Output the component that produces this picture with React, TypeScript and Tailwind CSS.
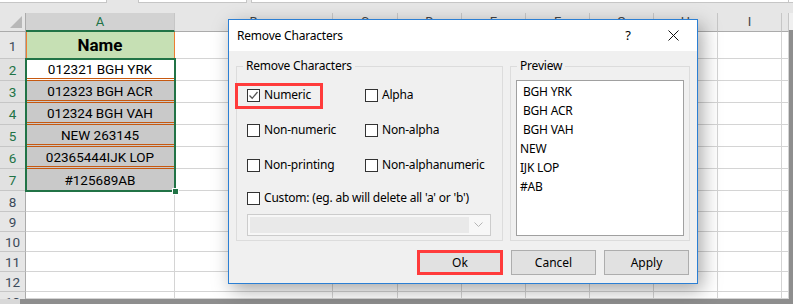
import React from "react";

const UI = { fontFamily: '"Noto Sans", "DejaVu Sans", sans-serif' };
const CELL = { fontFamily: 'Roboto, "Noto Sans", sans-serif' };

function Check({ checked = false }: { checked?: boolean }) {
  return (
    <div className="w-[13px] h-[13px] border border-[#333333] bg-white flex items-center justify-center shrink-0">
      {checked && (
        <svg width="11" height="11" viewBox="0 0 11 11">
          <polyline points="1.5,5.5 4.2,8.3 9.5,2" fill="none" stroke="#555555" strokeWidth="1.3" />
        </svg>
      )}
    </div>
  );
}

function Opt({ label, checked = false, children }: { label: string; checked?: boolean; children?: React.ReactNode }) {
  return (
    <div className="relative h-[18px] flex items-center">
      <Check checked={checked} />
      <span className="ml-[4px] text-[12px] tracking-[-0.2px] text-black leading-none whitespace-nowrap">{label}</span>
      {children}
    </div>
  );
}

function Btn({ label, hi = false }: { label: string; hi?: boolean }) {
  return (
    <div
      className={
        hi
          ? "w-[86px] h-[25px] bg-[#e1e1e1] border-[3px] border-[#ff3b3b] flex items-center justify-center text-[12px] text-black"
          : "w-[85px] h-[25px] bg-[#e1e1e1] border border-[#adadad] flex items-center justify-center text-[12px] text-black"
      }
    >
      {label}
    </div>
  );
}

export default function App() {
  const colLabels = ["A", "B", "C", "D", "E", "F", "G", "H", "I", ""];
  const data: Record<number, string> = {
    2: "012321 BGH YRK",
    3: "012323 BGH ACR",
    4: "012324 BGH VAH",
    5: "NEW 263145",
    6: "02365444IJK LOP",
    7: "#125689AB",
  };
  const rows = [1, 2, 3, 4, 5, 6, 7, 8, 9, 10, 11, 12, 13];
  const preview = [" BGH YRK", " BGH ACR", " BGH VAH", "NEW", "IJK LOP", "#AB"];

  const cells: React.ReactNode[] = [];
  cells.push(
    <div key="corner" className="relative bg-[#e6e6e6] border-r border-b border-[#ababab]">
      <svg className="absolute right-[3px] bottom-[3px]" width="12" height="12" viewBox="0 0 12 12">
        <polygon points="12,0 12,12 0,12" fill="#b8b8b8" />
      </svg>
    </div>
  );
  colLabels.forEach((c, i) => {
    cells.push(
      c === "A" ? (
        <div key={"h" + i} className="bg-[#d2d2d2] border-r border-[#c6c6c6] border-b-2 border-b-[#217346] flex items-center justify-center text-[13px] text-[#217346]">
          {c}
        </div>
      ) : (
        <div key={"h" + i} className="bg-[#e6e6e6] border-r border-[#c6c6c6] border-b border-b-[#ababab] flex items-center justify-center text-[13px] text-[#444444]">
          {c}
        </div>
      )
    );
  });
  rows.forEach((r) => {
    const sel = r >= 2 && r <= 7;
    let cls =
      "bg-[#e6e6e6] border-r border-r-[#ababab] border-b border-b-[#c6c6c6] flex items-center justify-center pt-[2px] overflow-hidden text-[13.5px] text-[#3c4a5a]";
    if (sel)
      cls =
        "bg-[#e1e1e1] border-r border-r-[#ababab] border-b border-b-[#c6c6c6] flex items-center justify-center pt-[2px] overflow-hidden text-[13.5px] text-[#217346]";
    if (r === 13)
      cls =
        "bg-[#e6e6e6] border-r border-r-[#ababab] flex items-start justify-center pt-[4px] leading-none overflow-hidden text-[13.5px] text-[#3c4a5a]";
    cells.push(
      <div key={"r" + r} className={cls}>
        {r}
      </div>
    );
    if (r === 1) {
      cells.push(
        <div key={"a" + r} className="bg-[#c6e0b4] border-r border-r-[#ed7d31] border-b border-b-[#d4d4d4] shadow-[inset_1px_0_0_#ed7d31] flex items-center justify-center pt-[2px] text-[17px] font-bold text-black">
          Name
        </div>
      );
    } else if (r === 2) {
      cells.push(
        <div key={"a" + r} className="bg-white border-r border-r-[#d4d4d4] border-b-[3px] border-double border-b-[#c65911] flex items-center justify-center pt-[2px] text-[13.5px] text-black">
          {data[r]}
        </div>
      );
    } else if (r >= 3 && r <= 6) {
      cells.push(
        <div key={"a" + r} className="bg-[#c9c9c9] border-r border-r-[#d4d4d4] border-b-[3px] border-double border-b-[#c65911] flex items-center justify-center pt-[2px] text-[13.5px] text-black">
          {data[r]}
        </div>
      );
    } else if (r === 7) {
      cells.push(
        <div key={"a" + r} className="bg-[#c9c9c9] border-r border-b border-[#d4d4d4] flex items-center justify-center pt-[2px] text-[13.5px] text-black">
          {data[r]}
        </div>
      );
    } else {
      cells.push(<div key={"a" + r} className="bg-white border-r border-b border-[#d4d4d4]" />);
    }
    for (let c = 1; c < colLabels.length; c++) {
      cells.push(<div key={"c" + r + "-" + c} className="bg-white border-r border-b border-[#d4d4d4]" />);
    }
  });

  return (
    <div className="w-[793px] h-[304px] overflow-hidden bg-white flex flex-col relative" style={CELL}>
      <div className="h-[13px] bg-[#e6e6e6] flex items-start shrink-0">
        <div className="w-[107px] h-[3px] bg-white border-b border-r border-[#c6c6c6]" />
        <div className="w-[31px]" />
        <div className="w-[109px] h-[3px] bg-white border-b border-x border-[#c6c6c6]" />
        <div className="w-[4px]" />
        <div className="w-[538px] h-[3px] bg-white border-b border-x border-[#c6c6c6]" />
        <div className="flex-1 h-[3px] bg-white border-b border-[#c6c6c6]" />
      </div>
      <div className="flex flex-1 min-h-0">
        <div className="grid grid-cols-[26px_149px_158px_65px_64px_64px_64px_64px_64px_64px_7px] grid-rows-[19px_27px_22px_22px_22px_22px_22px_22px_21px_20px_20px_20px_20px_7px] w-[789px] relative overflow-hidden">
          {cells}
          <div className="absolute left-[25px] top-[45px] w-[151px] h-[134px] border-2 border-[#217346] pointer-events-none" />
          <div className="absolute left-[172px] top-[175px] w-[7px] h-[7px] bg-[#217346] border border-white" />
        </div>
        <div className="w-[4px] flex flex-col">
          <div className="h-[17px] bg-[#f0f0f0]" />
          <div className="flex-1 bg-[#8e8e8e]" />
        </div>
      </div>
      <div className="h-[5px] flex shrink-0">
        <div className="w-[20px] bg-[#d8d8d8]" />
        <div className="flex-1 bg-[#8e8e8e]" />
      </div>

      <div
        className="absolute left-[228px] top-[19px] w-[470px] h-[265px] border border-[#2b7fd4] bg-[#f0f0f0] shadow-[4px_6px_18px_rgba(0,0,0,0.35)] flex flex-col"
        style={UI}
      >
        <div className="h-[31px] bg-white flex items-center shrink-0">
          <span className="ml-[8px] text-[12px] tracking-[-0.2px] text-black">Remove Characters</span>
          <div className="ml-auto flex items-center">
            <span className="w-[30px] text-center text-[13px] text-black">?</span>
            <div className="w-[30px] ml-[15px] mr-[9px] flex items-center justify-center">
              <svg width="11" height="11" viewBox="0 0 11 11">
                <line x1="0.5" y1="0.5" x2="10.5" y2="10.5" stroke="#111111" strokeWidth="1" />
                <line x1="10.5" y1="0.5" x2="0.5" y2="10.5" stroke="#111111" strokeWidth="1" />
              </svg>
            </div>
          </div>
        </div>
        <div className="pl-[7px] pr-[7px] pt-[7px] flex flex-col">
          <div className="flex gap-[7px]">
            <fieldset className="w-[267px] h-[183px] border border-[#dcdcdc] m-0 p-0 min-w-0">
              <legend className="ml-[6px] px-[3px] text-[12px] leading-[16px] tracking-[-0.2px] text-black">Remove Characters</legend>
              <div className="pl-[10px] pt-[12px]">
                <div className="grid grid-cols-[118px_1fr] gap-y-[17px]">
                  <Opt label="Numeric" checked>
                    <div className="absolute left-[-12px] top-[-3px] w-[88px] h-[26px] border-[3px] border-[#ff3b3b]" />
                  </Opt>
                  <Opt label="Alpha" />
                  <Opt label="Non-numeric" />
                  <Opt label="Non-alpha" />
                  <Opt label="Non-printing" />
                  <Opt label="Non-alphanumeric" />
                </div>
                <div className="mt-[15px]">
                  <Opt label="Custom: (eg. ab will delete all 'a' or 'b')" />
                </div>
                <div className="mt-[7px] w-[244px] h-[22px] border border-[#cccccc] bg-[#f7f7f7] flex items-stretch p-[2px]">
                  <div className="flex-1 bg-[#e9e9e9]" />
                  <div className="w-[19px] flex items-center justify-center">
                    <svg width="9" height="6" viewBox="0 0 9 6">
                      <polyline points="0.5,0.5 4.5,4.5 8.5,0.5" fill="none" stroke="#b5b5b5" strokeWidth="1" />
                    </svg>
                  </div>
                </div>
              </div>
            </fieldset>
            <fieldset className="w-[180px] h-[183px] border border-[#dcdcdc] m-0 p-0 min-w-0">
              <legend className="ml-[6px] px-[3px] text-[12px] leading-[16px] tracking-[-0.2px] text-black">Preview</legend>
              <div className="ml-[5px] mt-[6px] w-[168px] h-[156px] bg-white border border-[#a0a0a0] pl-[3px] pt-[1px]">
                {preview.map((p, i) => (
                  <div key={i} className="h-[19px] leading-[19px] text-[12px] tracking-[-0.2px] text-black whitespace-pre">
                    {p}
                  </div>
                ))}
              </div>
            </fieldset>
          </div>
          <div className="mt-[9px] flex justify-end gap-[8px] mr-[1px]">
            <Btn label="Ok" hi />
            <Btn label="Cancel" />
            <Btn label="Apply" />
          </div>
        </div>
      </div>
    </div>
  );
}
